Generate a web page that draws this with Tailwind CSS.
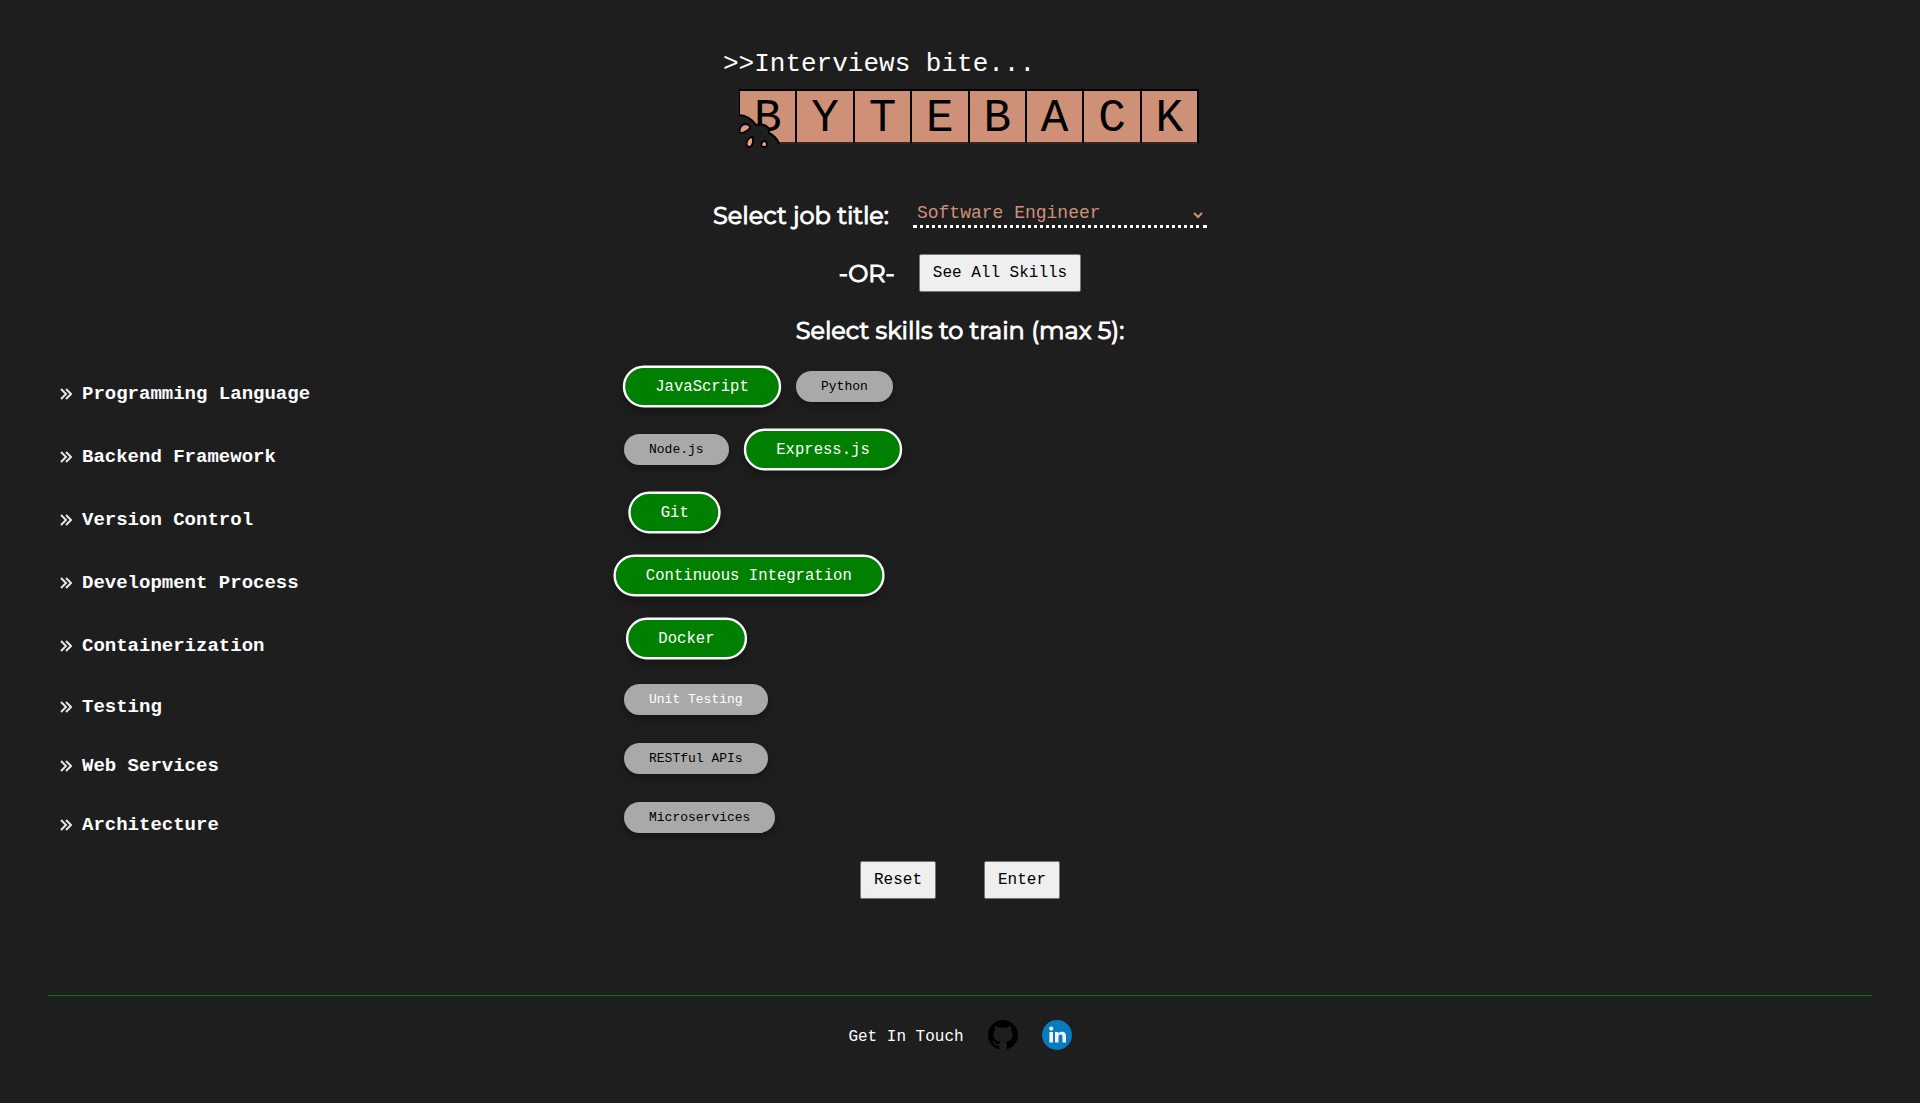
<!DOCTYPE html>
<html lang="en">
<head>
<meta charset="utf-8">
<meta name="viewport" content="width=device-width, initial-scale=1">
<title>Byteback</title>
<script src="https://cdn.jsdelivr.net/npm/@tailwindcss/browser@4"></script>
</head>
<body class="min-h-screen bg-[#1e1e1e] font-['Courier_New','Liberation_Mono',monospace] text-white">
<header class="mx-auto w-[478px] max-w-full pt-[46px]">
  <p class="pl-0.5 text-[26px] leading-9">&gt;&gt;Interviews bite...</p>
  <div class="relative mt-[7px] ml-[18px]">
    <h1 class="grid grid-cols-8 border-t-2 border-l border-black bg-[#ce9178] text-center text-[46px] leading-[45px] text-black" aria-label="Byteback">
      <span class="border-r-2 border-b-2 border-black border-b-[#35261f] pt-1.5">B</span>
      <span class="border-r-2 border-b-2 border-black border-b-[#35261f] pt-1.5">Y</span>
      <span class="border-r-2 border-b-2 border-black border-b-[#35261f] pt-1.5">T</span>
      <span class="border-r-2 border-b-2 border-black border-b-[#35261f] pt-1.5">E</span>
      <span class="border-r-2 border-b-2 border-black border-b-[#35261f] pt-1.5">B</span>
      <span class="border-r-2 border-b-2 border-black border-b-[#35261f] pt-1.5">A</span>
      <span class="border-r-2 border-b-2 border-black border-b-[#35261f] pt-1.5">C</span>
      <span class="border-r-2 border-b-2 border-black border-b-[#35261f] pt-1.5">K</span>
    </h1>
    <!-- bite taken out of the first tile, with crumbs -->
    <svg class="absolute top-[19px] -left-1" width="50" height="42" viewBox="0 0 50 42" aria-hidden="true">
      <path d="M0 7H4Q16 8 21 17Q29 14 34 20V25Q42 28 44 37V42H0Z" fill="#1e1e1e"/>
      <path d="M4 7Q15 8 21 17Q30 15 34 21V25Q42 29 44 36" fill="none" stroke="#000" stroke-width="2"/>
      <g stroke="#000" stroke-width="1.8">
        <path d="M4.500 24.500C4 19 7 16 11 16C16 17 16 20 13 22C10 24 8 26 4.500 24.500Z" fill="#dc9b80"/>
        <path d="M17 29C19 31 18 39 14 39C10 38 11 31 17 29Z" fill="#f7a07c"/>
        <path d="M29 33C33 34 33 39 29 39C25 39 26 34 29 33Z" fill="#f7a07c"/>
      </g>
    </svg>
  </div>
</header>

<main>
  <form>
    <div class="mt-[52px] flex h-10 items-center justify-center gap-6">
      <label for="job" class="font-[Montserrat,Inter,sans-serif] text-2xl [-webkit-text-stroke:1px_white]">Select job title:</label>
      <div class="relative mb-1">
        <select id="job" class="w-[294px] appearance-none border-b-3 border-dotted border-white bg-transparent pl-1 text-lg leading-6 text-[#ce9178]">
          <option>Software Engineer</option>
        </select>
        <svg class="pointer-events-none absolute top-[10px] right-1" width="10" height="8" viewBox="0 0 10 8" fill="none" stroke="#ce9178" stroke-width="2" aria-hidden="true"><path d="M1 2L5 6L9 2"/></svg>
      </div>
    </div>
    <div class="mt-[18px] flex items-center justify-center gap-6">
      <span class="pt-0.5 font-[Montserrat,Inter,sans-serif] text-2xl [-webkit-text-stroke:1px_white]">-OR-</span>
      <button type="button" class="h-[38px] rounded-xs border border-[#767676] bg-[#efefef] px-[13px] text-base text-black">See All Skills</button>
    </div>
    <h2 class="mt-[21px] text-center font-[Montserrat,Inter,sans-serif] text-2xl leading-9 [-webkit-text-stroke:1px_white]">Select skills to train (max 5):</h2>

    <div id="skills" class="mt-1.5 pr-5 pl-[60px]"></div>

    <div class="mt-[14px] flex justify-center gap-12">
      <button type="reset" class="h-[38px] rounded-xs border border-[#767676] bg-[#efefef] px-[13px] text-base text-black">Reset</button>
      <button type="button" class="h-[38px] rounded-xs border border-[#767676] bg-[#efefef] px-[13px] text-base text-black">Enter</button>
    </div>
  </form>
</main>

<footer class="mx-12 mt-24 flex items-center justify-center gap-6 border-t border-[#008000] pt-6">
  <p class="pt-1 text-base">Get In Touch</p>
  <a href="#github" aria-label="GitHub">
    <svg width="30" height="30" viewBox="0 0 16 16" fill="#000" aria-hidden="true"><path d="M8 0C3.58 0 0 3.58 0 8c0 3.54 2.29 6.53 5.47 7.59.4.07.55-.17.55-.38 0-.19-.01-.82-.01-1.49-2.01.37-2.53-.49-2.69-.94-.09-.23-.48-.94-.82-1.13-.28-.15-.68-.52-.01-.53.63-.01 1.08.58 1.23.82.72 1.21 1.87.87 2.33.66.07-.52.28-.87.51-1.07-1.78-.2-3.64-.89-3.64-3.95 0-.87.31-1.59.82-2.15-.08-.2-.36-1.02.08-2.12 0 0 .67-.21 2.2.82.64-.18 1.32-.27 2-.27s1.36.09 2 .27c1.53-1.04 2.2-.82 2.2-.82.44 1.1.16 1.92.08 2.12.51.56.82 1.27.82 2.15 0 3.07-1.87 3.75-3.65 3.95.29.25.54.73.54 1.48 0 1.07-.01 1.93-.01 2.2 0 .21.15.46.55.38A8.01 8.01 0 0 0 16 8c0-4.42-3.58-8-8-8z"/></svg>
  </a>
  <a href="#linkedin" aria-label="LinkedIn">
    <svg width="30" height="30" viewBox="0 0 30 30" aria-hidden="true"><circle cx="15" cy="15" r="15" fill="#0a7abf"/><g fill="#f1f3f5"><circle cx="9.2" cy="8.6" r="2.1"/><path d="M7.4 12H11V22.6H7.4ZM13 12H16.4V13.5C17.2 12.2 18.5 11.7 19.9 11.7C23 11.7 24 13.6 24 16.6V22.6H20.5V17.2C20.5 15.7 20.2 14.6 18.7 14.6C17.1 14.6 16.5 15.7 16.5 17.2V22.6H13Z"/></g></svg>
  </a>
</footer>

<script>
const rows = [
  ["Programming Language", [["JavaScript", 1], ["Python", 0]]],
  ["Backend Framework", [["Node.js", 0], ["Express.js", 1]]],
  ["Version Control", [["Git", 1]]],
  ["Development Process", [["Continuous Integration", 1]]],
  ["Containerization", [["Docker", 1]]],
  ["Testing", [["Unit Testing", 2]]],
  ["Web Services", [["RESTful APIs", 0]]],
  ["Architecture", [["Microservices", 0]]]
];
// 0: idle, 1: selected, 2: hovered
const look = [
  "bg-[#a9a9a9] text-black",
  "mx-3 scale-120 border-2 border-white bg-[#008000] text-white",
  "bg-[#a9a9a9] text-white"
];
document.getElementById("skills").innerHTML = rows.map(([title, chips]) => `
  <section class="grid grid-cols-[3fr_7fr] items-center py-[14px]">
    <h3 class="flex items-center gap-2.5 pt-4 text-[19px] leading-[15px] font-bold">
      <svg class="mb-0.5" width="12" height="12" viewBox="0 0 12 12" fill="none" stroke="#e6e6e6" stroke-width="2" aria-hidden="true"><path d="M1 1L6 6L1 11M6 1L11 6L6 11"/></svg>
      ${title}
    </h3>
    <div class="flex items-center gap-4 pl-3">
      ${chips.map(([name, s]) => `<button type="button" class="rounded-full px-[25px] py-1.5 text-[13px] leading-[19px] shadow-[0_4px_8px_rgba(0,0,0,0.3)] ${look[s]}">${name}</button>`).join("")}
    </div>
  </section>`).join("");
</script>
</body>
</html>
